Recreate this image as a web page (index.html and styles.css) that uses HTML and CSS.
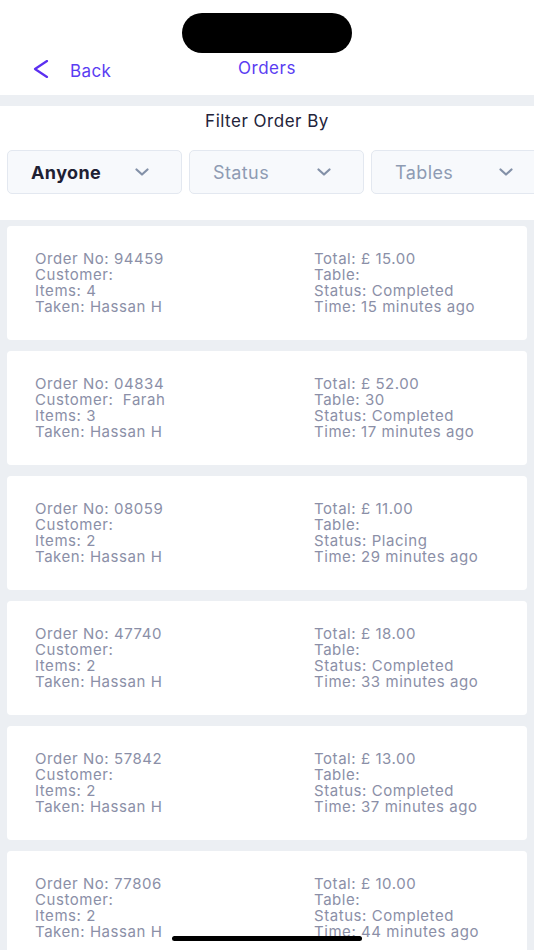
FILE: index.html
```html
<!DOCTYPE html>
<html>
<head>
<meta charset="utf-8">
<link rel="stylesheet" href="styles.css">
</head>
<body>
<div class="page">
  <header class="header">
    <div class="notch"></div>
    <div class="nav">
      <div class="back">
        <svg class="back-icon" width="16" height="18" viewBox="0 0 16 18"><path d="M14 1 L2 9 L14 17" fill="none" stroke="#5b2ff0" stroke-width="2.2" stroke-linecap="round" stroke-linejoin="round"/></svg>
        <span class="back-text">Back</span>
      </div>
      <div class="title">Orders</div>
    </div>
  </header>

  <section class="filters">
    <div class="filter-title">Filter Order By</div>
    <div class="dropdowns">
      <div class="dropdown active"><span>Anyone</span><svg class="chev" width="14" height="8" viewBox="0 0 14 8"><path d="M1.5 1.5 L7 6.5 L12.5 1.5" fill="none" stroke="#8391a8" stroke-width="2.2" stroke-linecap="round" stroke-linejoin="round"/></svg></div>
      <div class="dropdown"><span>Status</span><svg class="chev" width="14" height="8" viewBox="0 0 14 8"><path d="M1.5 1.5 L7 6.5 L12.5 1.5" fill="none" stroke="#8391a8" stroke-width="2.2" stroke-linecap="round" stroke-linejoin="round"/></svg></div>
      <div class="dropdown"><span>Tables</span><svg class="chev" width="14" height="8" viewBox="0 0 14 8"><path d="M1.5 1.5 L7 6.5 L12.5 1.5" fill="none" stroke="#8391a8" stroke-width="2.2" stroke-linecap="round" stroke-linejoin="round"/></svg></div>
    </div>
  </section>

  <main class="orders">
    <div class="card">
      <div class="col"><div>Order No: 94459</div><div>Customer:</div><div>Items: 4</div><div>Taken: Hassan H</div></div>
      <div class="col"><div>Total: £ 15.00</div><div>Table:</div><div>Status: Completed</div><div>Time: 15 minutes ago</div></div>
    </div>
    <div class="card">
      <div class="col"><div>Order No: 04834</div><div>Customer:&nbsp; Farah</div><div>Items: 3</div><div>Taken: Hassan H</div></div>
      <div class="col"><div>Total: £ 52.00</div><div>Table: 30</div><div>Status: Completed</div><div>Time: 17 minutes ago</div></div>
    </div>
    <div class="card">
      <div class="col"><div>Order No: 08059</div><div>Customer:</div><div>Items: 2</div><div>Taken: Hassan H</div></div>
      <div class="col"><div>Total: £ 11.00</div><div>Table:</div><div>Status: Placing</div><div>Time: 29 minutes ago</div></div>
    </div>
    <div class="card">
      <div class="col"><div>Order No: 47740</div><div>Customer:</div><div>Items: 2</div><div>Taken: Hassan H</div></div>
      <div class="col"><div>Total: £ 18.00</div><div>Table:</div><div>Status: Completed</div><div>Time: 33 minutes ago</div></div>
    </div>
    <div class="card">
      <div class="col"><div>Order No: 57842</div><div>Customer:</div><div>Items: 2</div><div>Taken: Hassan H</div></div>
      <div class="col"><div>Total: £ 13.00</div><div>Table:</div><div>Status: Completed</div><div>Time: 37 minutes ago</div></div>
    </div>
    <div class="card">
      <div class="col"><div>Order No: 77806</div><div>Customer:</div><div>Items: 2</div><div>Taken: Hassan H</div></div>
      <div class="col"><div>Total: £ 10.00</div><div>Table:</div><div>Status: Completed</div><div>Time: 44 minutes ago</div></div>
    </div>
  </main>
  <div class="home-indicator"></div>
</div>
</body>
</html>
```

FILE: styles.css
```css
html, body {
  margin: 0;
  padding: 0;
}
body {
  background: #eceff3;
  font-family: Inter, "Noto Sans", "Liberation Sans", sans-serif;
  width: 534px;
  height: 950px;
  overflow: hidden;
}
.page {
  position: relative;
  width: 534px;
  height: 950px;
  overflow: hidden;
}
.header {
  position: relative;
  background: #ffffff;
  height: 95px;
}
.notch {
  position: absolute;
  left: 182px;
  top: 13px;
  width: 170px;
  height: 40px;
  border-radius: 20px;
  background: #000;
}
.nav {
  position: relative;
  height: 95px;
  display: flex;
  align-items: flex-start;
}
.back {
  display: flex;
  align-items: center;
  padding: 57px 0 0 33px;
  gap: 21px;
}
.back-icon {
  display: block;
}
.back-text {
  font-size: 17px;
  letter-spacing: 0.4px;
  color: #5a3df2;
  margin-top: 4px;
}
.title {
  position: absolute;
  left: 0;
  right: 0;
  top: 58px;
  text-align: center;
  font-size: 17px;
  letter-spacing: 0.5px;
  color: #5a3df2;
}
.filters {
  background: #ffffff;
  margin-top: 11px;
  height: 114px;
  overflow: hidden;
}
.filter-title {
  text-align: center;
  font-size: 17px;
  letter-spacing: 0.5px;
  color: #23233a;
  padding-top: 3px;
  height: 24px;
  line-height: 24px;
}
.dropdowns {
  display: flex;
  gap: 7px;
  padding: 0 7px;
  margin-top: 17px;
  width: 600px;
}
.dropdown {
  flex: 0 0 175px;
  box-sizing: border-box;
  height: 44px;
  background: #f7f9fc;
  border: 1px solid #e3e8f0;
  border-radius: 5px;
  display: flex;
  align-items: center;
  justify-content: space-between;
  padding: 0 32px 0 23px;
  font-size: 18px;
  letter-spacing: 0.4px;
  color: #8e9bb3;
}
.dropdown.active {
  color: #1e2033;
  font-weight: 700;
}
.chev {
  display: block;
}
.orders {
  margin-top: 6px;
  padding: 0 7px;
  display: flex;
  flex-direction: column;
  gap: 11px;
}
.card {
  background: #ffffff;
  border-radius: 4px;
  height: 114px;
  box-sizing: border-box;
  padding: 25px 20px 25px 28px;
  display: grid;
  grid-template-columns: 279px 1fr;
  align-content: center;
  font-size: 15px;
  letter-spacing: 0.55px;
  line-height: 16px;
  color: #8b8fa7;
}
.col div {
  white-space: pre;
}
.home-indicator {
  position: absolute;
  left: 172px;
  top: 936px;
  width: 190px;
  height: 5px;
  border-radius: 3px;
  background: #000;
}
```
